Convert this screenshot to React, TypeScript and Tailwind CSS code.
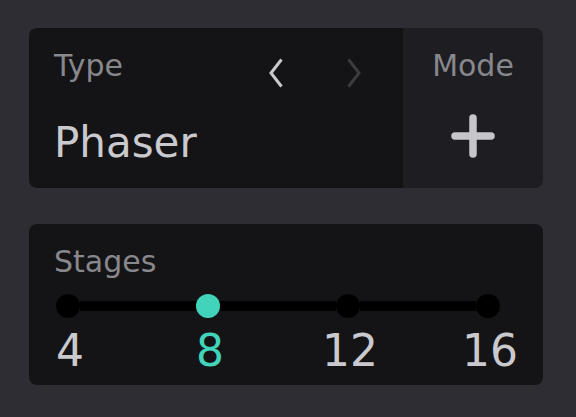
export default function App() {
  const stages = [4, 8, 12, 16];
  const selected = 8;

  return (
    <div className="min-h-[417px] w-[576px] bg-[#2e2d33] pl-[29px] pt-[28px] font-['DejaVu_Sans',sans-serif]">
      {/* Type / Mode panel */}
      <div className="flex h-[160px] w-[514px] overflow-hidden rounded-[8px]">
        <div className="flex w-[374px] flex-col bg-[#141416] pl-[25px] pr-[42px] pt-[20px]">
          <div className="flex items-start">
            <span className="text-[30px] leading-[36px] text-[#87878c]">Type</span>
            <div className="ml-auto mt-[10px] flex gap-[64px]">
              <svg width="14" height="30" viewBox="0 0 14 30" fill="none">
                <path d="M12.5 1.5L2 15l10.5 13.5" stroke="#c9c9cd" strokeWidth="3" />
              </svg>
              <svg width="14" height="30" viewBox="0 0 14 30" fill="none">
                <path d="M1.5 1.5L12 15 1.5 28.5" stroke="#3b3b40" strokeWidth="3" />
              </svg>
            </div>
          </div>
          <span className="mt-[31px] text-[42px] leading-[48px] text-[#cacace]">Phaser</span>
        </div>
        <div className="flex flex-1 flex-col items-center bg-[#1e1e22] pt-[20px]">
          <span className="text-[30px] leading-[36px] text-[#87878c]">Mode</span>
          <svg className="mt-[30px]" width="44" height="44" viewBox="0 0 44 44" fill="none">
            <path d="M22 4v36M4 22h36" stroke="#c6c6ca" strokeWidth="7.5" strokeLinecap="round" />
          </svg>
        </div>
      </div>

      {/* Stages panel */}
      <div className="mt-[36px] flex h-[161px] w-[514px] flex-col rounded-[8px] bg-[#141416] pl-[25px] pt-[20px]">
        <span className="text-[30px] leading-[36px] text-[#87878c]">Stages</span>
        <div className="ml-[2px] mt-[14px] flex w-[444px] items-center">
          {stages.map((s, i) => (
            <div key={s} className={i === stages.length - 1 ? 'flex items-center' : 'flex flex-1 items-center'}>
              <div
                className={
                  s === selected
                    ? 'h-[24px] w-[24px] shrink-0 rounded-full bg-[#41d4bb]'
                    : 'h-[24px] w-[24px] shrink-0 rounded-full bg-black'
                }
              />
              {i < stages.length - 1 && <div className="h-[10px] flex-1 bg-black" />}
            </div>
          ))}
        </div>
        <div className="ml-[4px] mt-[11px] flex w-[444px] justify-between">
          {stages.map((s) => (
            <div key={s} className="flex w-[24px] justify-center">
              <span
                className={
                  s === selected
                    ? 'whitespace-nowrap text-[44px] leading-[44px] text-[#41d4bb]'
                    : 'whitespace-nowrap text-[44px] leading-[44px] text-[#cacace]'
                }
              >
                {s}
              </span>
            </div>
          ))}
        </div>
      </div>
    </div>
  );
}
